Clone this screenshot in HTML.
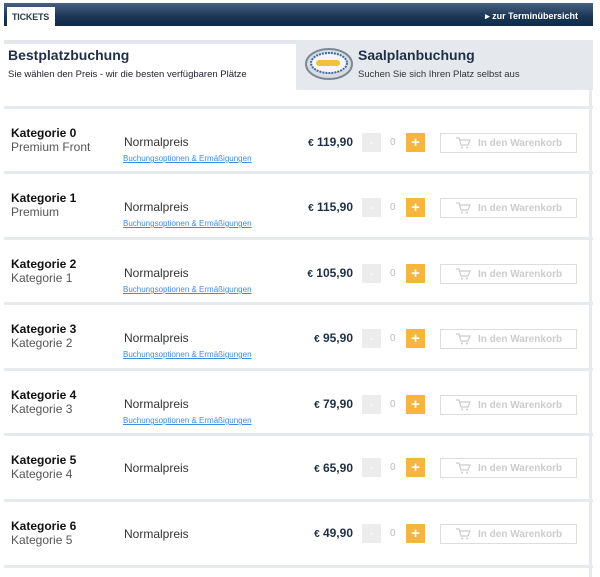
<!DOCTYPE html>
<html><head><meta charset="utf-8"><style>
*{margin:0;padding:0;box-sizing:border-box}
body{width:600px;height:577px;background:#fff;font-family:"Liberation Sans",Arial,sans-serif;position:relative;overflow:hidden}
.hdr{position:absolute;left:4px;top:3px;width:589px;height:23px;background:linear-gradient(#46607f,#1b3554 60%,#102a48)}
.tab{position:absolute;left:3px;top:4px;width:48px;height:19px;background:#fff;font-size:9px;font-weight:bold;color:#2b3a4f;padding:5px 0 0 5px;letter-spacing:-.2px}
.back{position:absolute;right:15px;top:8px;font-size:9px;font-weight:bold;color:#fff}
.gtop{position:absolute;left:4px;top:40px;width:589px;height:4px;background:#e3e6eb}
.lp{position:absolute;left:4px;top:44px;width:292px;height:46px;background:#fff}
.rp{position:absolute;left:296px;top:40px;width:297px;height:50px;background:#e5e8ed}
.h{font-size:14px;font-weight:bold;color:#1f2f45}
.s{font-size:9.5px;color:#223;}
.sep{position:absolute;left:4px;width:589px;height:3px;background:#e6e9ee}
.rb{position:absolute;left:589px;top:90px;width:3px;height:487px;background:#e6e9ee}
.row{position:absolute;left:4px;width:585px;height:62px}
.k{position:absolute;left:7px;font-size:12px;font-weight:bold;color:#111}
.k2{position:absolute;left:7px;font-size:12px;color:#555}
.np{position:absolute;left:120px;font-size:12px;color:#333}
.lk{position:absolute;left:119px;font-size:8px;color:#3a8de0;text-decoration:underline}
.pr{position:absolute;right:236px;font-size:12px;font-weight:bold;color:#1f2f45}
.pr small{font-size:10px}
.mi{position:absolute;left:358px;width:19px;height:19px;background:#ececec;color:#fff;font-size:12px;text-align:center;line-height:18px}
.z{position:absolute;left:386px;font-size:10px;color:#bbb}
.pl{position:absolute;left:402px;width:19px;height:19px;background:#f5b53e;color:#fff;font-weight:bold;font-size:15px;text-align:center;line-height:19px}
.cb{position:absolute;left:436px;width:137px;height:20px;border:1px solid #ddd;font-size:10px;font-weight:bold;color:#ccc;padding:4px 0 0 37px}
.cb svg{position:absolute;left:14px;top:3px}
</style></head><body>
<div class="hdr"><div class="tab">TICKETS</div><div class="back">▸ zur Terminübersicht</div></div>
<div class="gtop"></div>
<div class="lp"><div class="h" style="position:absolute;left:4px;top:3px">Bestplatzbuchung</div><div class="s" style="position:absolute;left:4px;top:25px">Sie wählen den Preis - wir die besten verfügbaren Plätze</div></div>
<div class="rp">
<svg style="position:absolute;left:8px;top:5px" width="52" height="40" viewBox="0 0 52 40"><ellipse cx="25" cy="19" rx="23" ry="15" fill="#d8dde3" stroke="#7d8896" stroke-width="2"/><ellipse cx="25" cy="18" rx="18" ry="10" fill="#f4f6f8" stroke="#3d6b9e" stroke-width="2" stroke-dasharray="2 1"/><rect x="12" y="15" width="24" height="6" rx="3" fill="#f0c23a"/></svg>
<div class="h" style="position:absolute;left:62px;top:7px">Saalplanbuchung</div><div class="s" style="position:absolute;left:62px;top:29px;color:#333">Suchen Sie sich Ihren Platz selbst aus</div></div>
<div class="rb"></div>
<div class="sep" style="top:106px"></div>
<div class="sep" style="top:171px"></div>
<div class="sep" style="top:237px"></div>
<div class="sep" style="top:302px"></div>
<div class="sep" style="top:368px"></div>
<div class="sep" style="top:433px"></div>
<div class="sep" style="top:499px"></div>
<div class="sep" style="top:565px"></div>

<div class="row" style="top:109px"><div class="k" style="top:17px">Kategorie 0</div><div class="k2" style="top:31px">Premium Front</div><div class="np" style="top:26px">Normalpreis</div><div class="lk" style="top:45px">Buchungsoptionen &amp; Ermäßigungen</div><div class="pr" style="top:26px"><small>€</small> 119,90</div><div class="mi" style="top:24px">-</div><div class="z" style="top:28px">0</div><div class="pl" style="top:24px">+</div><div class="cb" style="top:24px"><svg width="16" height="12" viewBox="0 0 16 12"><path d="M1 1h3l2 7h7l2-5H5" fill="none" stroke="#ccc" stroke-width="1.2"/><circle cx="7" cy="10.5" r="1" fill="#ccc"/><circle cx="12" cy="10.5" r="1" fill="#ccc"/></svg>In den Warenkorb</div></div>

<div class="row" style="top:174px"><div class="k" style="top:17px">Kategorie 1</div><div class="k2" style="top:31px">Premium</div><div class="np" style="top:26px">Normalpreis</div><div class="lk" style="top:45px">Buchungsoptionen &amp; Ermäßigungen</div><div class="pr" style="top:26px"><small>€</small> 115,90</div><div class="mi" style="top:24px">-</div><div class="z" style="top:28px">0</div><div class="pl" style="top:24px">+</div><div class="cb" style="top:24px"><svg width="16" height="12" viewBox="0 0 16 12"><path d="M1 1h3l2 7h7l2-5H5" fill="none" stroke="#ccc" stroke-width="1.2"/><circle cx="7" cy="10.5" r="1" fill="#ccc"/><circle cx="12" cy="10.5" r="1" fill="#ccc"/></svg>In den Warenkorb</div></div>

<div class="row" style="top:240px"><div class="k" style="top:17px">Kategorie 2</div><div class="k2" style="top:31px">Kategorie 1</div><div class="np" style="top:26px">Normalpreis</div><div class="lk" style="top:45px">Buchungsoptionen &amp; Ermäßigungen</div><div class="pr" style="top:26px"><small>€</small> 105,90</div><div class="mi" style="top:24px">-</div><div class="z" style="top:28px">0</div><div class="pl" style="top:24px">+</div><div class="cb" style="top:24px"><svg width="16" height="12" viewBox="0 0 16 12"><path d="M1 1h3l2 7h7l2-5H5" fill="none" stroke="#ccc" stroke-width="1.2"/><circle cx="7" cy="10.5" r="1" fill="#ccc"/><circle cx="12" cy="10.5" r="1" fill="#ccc"/></svg>In den Warenkorb</div></div>

<div class="row" style="top:305px"><div class="k" style="top:17px">Kategorie 3</div><div class="k2" style="top:31px">Kategorie 2</div><div class="np" style="top:26px">Normalpreis</div><div class="lk" style="top:45px">Buchungsoptionen &amp; Ermäßigungen</div><div class="pr" style="top:26px"><small>€</small> 95,90</div><div class="mi" style="top:24px">-</div><div class="z" style="top:28px">0</div><div class="pl" style="top:24px">+</div><div class="cb" style="top:24px"><svg width="16" height="12" viewBox="0 0 16 12"><path d="M1 1h3l2 7h7l2-5H5" fill="none" stroke="#ccc" stroke-width="1.2"/><circle cx="7" cy="10.5" r="1" fill="#ccc"/><circle cx="12" cy="10.5" r="1" fill="#ccc"/></svg>In den Warenkorb</div></div>

<div class="row" style="top:371px"><div class="k" style="top:17px">Kategorie 4</div><div class="k2" style="top:31px">Kategorie 3</div><div class="np" style="top:26px">Normalpreis</div><div class="lk" style="top:45px">Buchungsoptionen &amp; Ermäßigungen</div><div class="pr" style="top:26px"><small>€</small> 79,90</div><div class="mi" style="top:24px">-</div><div class="z" style="top:28px">0</div><div class="pl" style="top:24px">+</div><div class="cb" style="top:24px"><svg width="16" height="12" viewBox="0 0 16 12"><path d="M1 1h3l2 7h7l2-5H5" fill="none" stroke="#ccc" stroke-width="1.2"/><circle cx="7" cy="10.5" r="1" fill="#ccc"/><circle cx="12" cy="10.5" r="1" fill="#ccc"/></svg>In den Warenkorb</div></div>

<div class="row" style="top:436px"><div class="k" style="top:17px">Kategorie 5</div><div class="k2" style="top:31px">Kategorie 4</div><div class="np" style="top:25px">Normalpreis</div><div class="pr" style="top:25px"><small>€</small> 65,90</div><div class="mi" style="top:22px">-</div><div class="z" style="top:26px">0</div><div class="pl" style="top:22px">+</div><div class="cb" style="top:22px"><svg width="16" height="12" viewBox="0 0 16 12"><path d="M1 1h3l2 7h7l2-5H5" fill="none" stroke="#ccc" stroke-width="1.2"/><circle cx="7" cy="10.5" r="1" fill="#ccc"/><circle cx="12" cy="10.5" r="1" fill="#ccc"/></svg>In den Warenkorb</div></div>

<div class="row" style="top:502px"><div class="k" style="top:17px">Kategorie 6</div><div class="k2" style="top:31px">Kategorie 5</div><div class="np" style="top:25px">Normalpreis</div><div class="pr" style="top:24px"><small>€</small> 49,90</div><div class="mi" style="top:22px">-</div><div class="z" style="top:26px">0</div><div class="pl" style="top:22px">+</div><div class="cb" style="top:22px"><svg width="16" height="12" viewBox="0 0 16 12"><path d="M1 1h3l2 7h7l2-5H5" fill="none" stroke="#ccc" stroke-width="1.2"/><circle cx="7" cy="10.5" r="1" fill="#ccc"/><circle cx="12" cy="10.5" r="1" fill="#ccc"/></svg>In den Warenkorb</div></div>
</body></html>
